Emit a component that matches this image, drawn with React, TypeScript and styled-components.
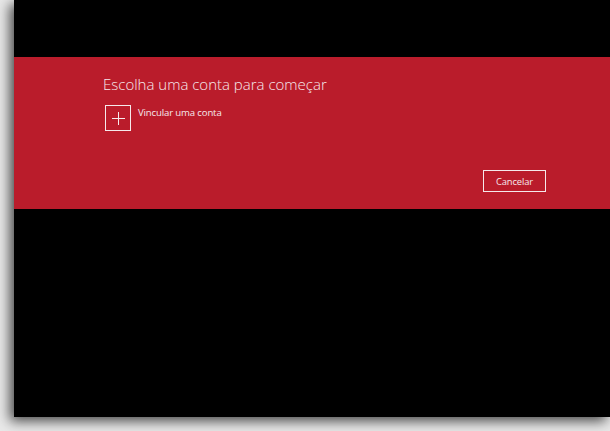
import styled, { createGlobalStyle } from 'styled-components';

const GlobalStyle = createGlobalStyle`
  html, body {
    margin: 0;
    padding: 0;
    background: #e9e9e9;
    overflow: hidden;
  }
`;

export default function App() {
  return (
    <>
      <GlobalStyle />
      <Screen>
        <Window>
          <TopSpace />
          <Band>
            <Title>Escolha uma conta para começar</Title>
            <AccountRow>
              <PlusBox>
                <svg width="13" height="13" viewBox="0 0 13 13">
                  <path d="M6.5 0v13M0 6.5h13" stroke="#f6e9eb" strokeWidth="1" fill="none" />
                </svg>
              </PlusBox>
              <AccountLabel>Vincular uma conta</AccountLabel>
            </AccountRow>
            <Footer>
              <CancelButton>Cancelar</CancelButton>
            </Footer>
          </Band>
        </Window>
      </Screen>
    </>
  );
}

const Screen = styled.div`
  width: 610px;
  height: 431px;
  display: flex;
  justify-content: flex-end;
  align-items: flex-start;
`;

const Window = styled.div`
  width: 596px;
  height: 417px;
  background: #000;
  display: flex;
  flex-direction: column;
  box-shadow: -4px 4px 12px rgba(0, 0, 0, 0.7);
`;

const TopSpace = styled.div`
  height: 57px;
`;

const Band = styled.div`
  height: 152px;
  box-sizing: border-box;
  background: #ba1c2b;
  padding: 17px 64px 0 89px;
  display: flex;
  flex-direction: column;
  font-family: 'Open Sans', 'Noto Sans', sans-serif;
  color: #f6e9eb;
`;

const Title = styled.h1`
  margin: 0;
  font-size: 15px;
  line-height: 21px;
  font-weight: 300;
`;

const AccountRow = styled.div`
  display: flex;
  align-items: flex-start;
  gap: 7px;
  margin: 10px 0 0 2px;
`;

const PlusBox = styled.div`
  width: 26px;
  height: 26px;
  box-sizing: border-box;
  border: 1.5px solid #f6e9eb;
  display: flex;
  align-items: center;
  justify-content: center;
`;

const AccountLabel = styled.span`
  font-size: 9.6px;
  line-height: 14px;
  letter-spacing: -0.15px;
  margin-top: 1px;
`;

const Footer = styled.div`
  display: flex;
  justify-content: flex-end;
  margin-top: 39px;
`;

const CancelButton = styled.button`
  width: 63px;
  height: 22px;
  box-sizing: border-box;
  background: transparent;
  border: 1.5px solid #f6e9eb;
  color: #f6e9eb;
  font-family: 'Open Sans', 'Noto Sans', sans-serif;
  font-size: 9.4px;
  letter-spacing: -0.1px;
  padding: 0;
  cursor: pointer;
`;
